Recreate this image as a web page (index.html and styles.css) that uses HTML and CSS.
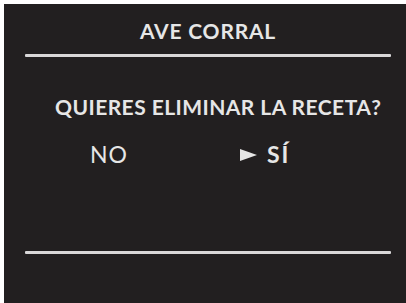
FILE: index.html
```html
<!DOCTYPE html>
<html>
<head>
<meta charset="utf-8">
<link rel="stylesheet" href="styles.css">
</head>
<body>
<div class="screen">
  <div class="title">AVE CORRAL</div>
  <div class="rule"></div>
  <div class="question">QUIERES ELIMINAR LA RECETA?</div>
  <div class="options">
    <span class="opt no">NO</span>
    <span class="opt yes"><span class="arrow"></span>SÍ</span>
  </div>
  <div class="rule bottom"></div>
</div>
</body>
</html>
```

FILE: styles.css
```css
html, body {
  margin: 0;
  padding: 0;
  background: #ffffff;
  width: 406px;
  height: 303px;
  overflow: hidden;
}
.screen {
  margin: 4px 0 0 4px;
  width: 402px;
  height: 299px;
  background: #221f20;
  color: #e6e6e6;
  font-family: "Lato", "DejaVu Sans", sans-serif;
  display: flex;
  flex-direction: column;
  box-sizing: border-box;
  padding: 0 15px 0 21px;
}
.title {
  font-weight: 700;
  font-size: 21px;
  line-height: 24px;
  text-align: center;
  margin-top: 15px;
  letter-spacing: 0.8px;
}
.rule {
  height: 3px;
  background: #d9d7d8;
  margin-top: 11px;
  border-radius: 1px;
}
.question {
  font-weight: 700;
  font-size: 21px;
  line-height: 24px;
  margin-top: 38px;
  padding-left: 30px;
  letter-spacing: 0.45px;
  white-space: nowrap;
}
.options {
  display: flex;
  align-items: center;
  margin-top: 23px;
  font-size: 23px;
  line-height: 24px;
}
.no {
  margin-left: 65px;
  width: 150px;
  font-weight: 400;
  letter-spacing: 1px;
}
.yes {
  font-weight: 700;
  display: flex;
  align-items: center;
  letter-spacing: 2px;
  font-size: 23px;
}
.arrow {
  width: 0;
  height: 0;
  border-top: 6px solid transparent;
  border-bottom: 6px solid transparent;
  border-left: 17px solid #e6e6e6;
  margin-right: 10px;
  margin-top: 1px;
}
.rule.bottom {
  margin-top: 85px;
}
```
